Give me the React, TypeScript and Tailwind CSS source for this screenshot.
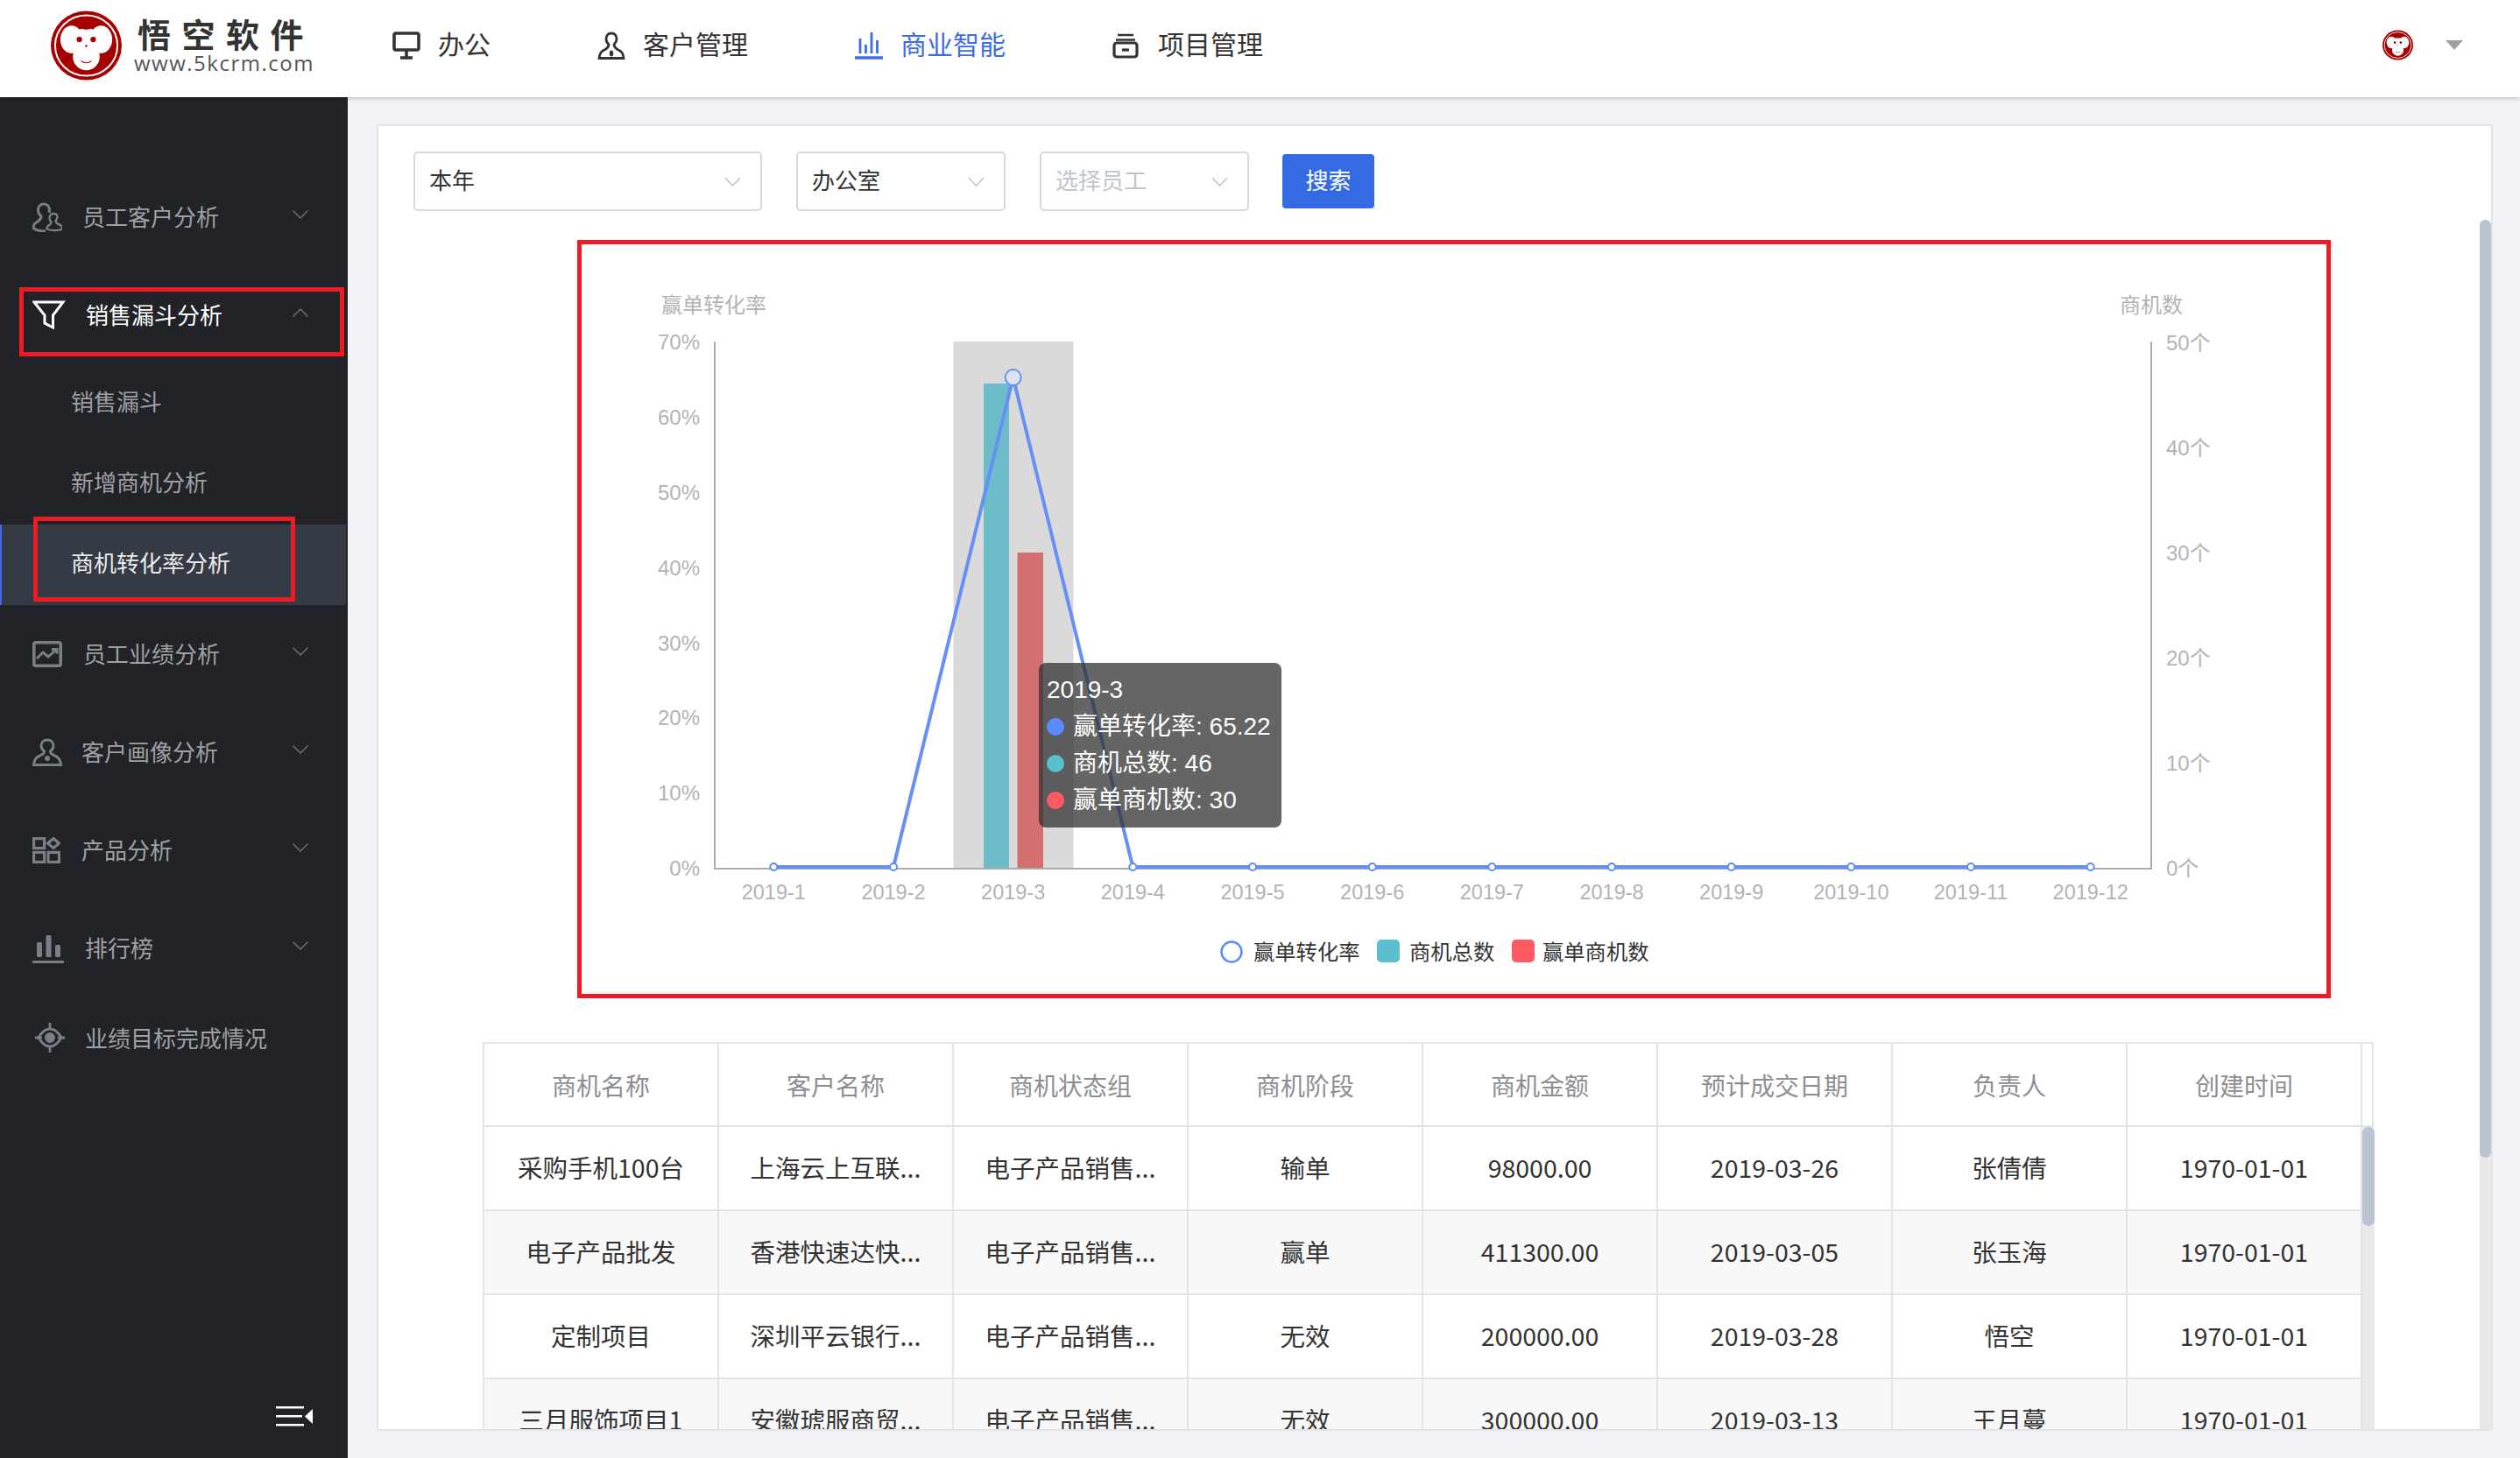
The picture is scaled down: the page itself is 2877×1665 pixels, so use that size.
import React from "react";

function MonkeyLogo({ className }: { className: string }) {
  return (
    <svg viewBox="0 0 82 80" className={className}>
      <ellipse cx="41" cy="40" rx="41" ry="40" fill="#a60000" />
      <ellipse cx="41" cy="40" rx="36" ry="35" fill="none" stroke="#fff" strokeWidth="2" />
      <ellipse cx="24" cy="33" rx="13" ry="16" fill="#fff" />
      <ellipse cx="58" cy="33" rx="13" ry="16" fill="#fff" />
      <ellipse cx="41" cy="35" rx="18" ry="15" fill="#fff" />
      <path d="M31 17 Q41 26 51 17 L46 10 H36 Z" fill="#a60000" />
      <ellipse cx="41" cy="53" rx="15.5" ry="15.5" fill="#fff" />
      <circle cx="33" cy="33" r="3.2" fill="#a60000" />
      <circle cx="49" cy="33" r="3.2" fill="#a60000" />
      <circle cx="41" cy="40.5" r="1.2" fill="#a60000" />
      <path d="M35 58 Q41 62 47 58" fill="none" stroke="#a60000" strokeWidth="1.2" />
    </svg>
  );
}

function IconMonitor() {
  return (
    <svg viewBox="0 0 32 32" className="w-[32px] h-[32px] text-[#333]" fill="none" stroke="currentColor" strokeWidth="3.6">
      <rect x="2" y="2" width="28" height="19" rx="2" />
      <path d="M16 21v8M9 30h14" />
    </svg>
  );
}
function IconCustomer() {
  return (
    <svg viewBox="0 0 32 32" className="w-[32px] h-[32px] text-[#333]" fill="none" stroke="currentColor" strokeWidth="2.8">
      <path d="M16 2c-4 0-6 3-6 6.5 0 3 1.5 5 3 6.5 0 2.500-1 3.500-4 5.500-4.500 2-6.500 4-7 10h28c-.5-6-2.500-8-7-10-3-2-4-3-4-5.500 1.500-1.500 3-3.500 3-6.500C22 5 20 2 16 2z" />
      <ellipse cx="16" cy="25" rx="2.2" ry="3.5" fill="currentColor" stroke="none" />
    </svg>
  );
}
function IconBI() {
  return (
    <svg viewBox="0 0 32 32" className="w-[32px] h-[32px] text-[#3e6ce6]" fill="none" stroke="currentColor" strokeWidth="2.8">
      <path d="M6 8v17M12.5 15v10M19 1v24M25.5 10v15" />
      <path d="M0 30h32" strokeWidth="3.6" strokeLinecap="round" />
    </svg>
  );
}
function IconProject() {
  return (
    <svg viewBox="0 0 30 30" className="w-[30px] h-[30px] text-[#333]" fill="none" stroke="currentColor" strokeWidth="3.2">
      <path d="M6 3h18M4 8.5h22" strokeWidth="2.4" />
      <rect x="2" y="12" width="26" height="16" rx="3" />
      <path d="M11 20h8" />
    </svg>
  );
}

const side = "w-[34px] h-[34px] text-[#7b7e84]";
function SPeople() {
  return (
    <svg viewBox="0 0 34 34" className={side} fill="none" stroke="currentColor" strokeWidth="3">
      <path d="M13 2c-4 0-6.5 3-6.5 7 0 3 1.5 5.5 3.5 7 0 3-1 4-4 6-3 1.500-5 3-5 7.500 4 3 10 3.500 14 3.500" />
      <path d="M13 2c4 0 6.500 3 6.500 7 0 1-.2 2-.5 3" />
      <path d="M24 13c-3 0-4.500 2.500-4.500 5 0 2 1 3.500 2 4.500 0 2-1 3-3 4-2 1-2 4-2 4 5 2 12 2 18 0 0-3-2-4.500-5-5.500-2-1-3-2.500-3-4 1-1 2-2.500 2-4.500 0-2.500-1.500-3.500-4.500-3.500z" strokeWidth="2.4" />
    </svg>
  );
}
function STrend() {
  return (
    <svg viewBox="0 0 34 30" className="w-[34px] h-[30px] text-[#7b7e84]" fill="none" stroke="currentColor" strokeWidth="3.6">
      <rect x="1.8" y="1.8" width="30.4" height="26.4" rx="2" />
      <path d="M5 20l7-7 6 5 9-8M22 9.500h6v5" strokeWidth="3" />
    </svg>
  );
}
function SPerson() {
  return (
    <svg viewBox="0 0 34 32" className="w-[34px] h-[32px] text-[#7b7e84]" fill="none" stroke="currentColor" strokeWidth="3">
      <path d="M17 2c-4 0-7 2.500-7 6.500 0 3 1.500 5 3.500 6.500 0 2.500-1 3-5 5-4 1.500-6.500 4-7 10.500h31c-.5-6.500-3-9-7-10.500-4-2-5-2.500-5-5 2-1.500 3.500-3.500 3.500-6.500C24 4.500 21 2 17 2z" />
      <circle cx="17" cy="23" r="3" fill="currentColor" stroke="none" />
    </svg>
  );
}
function SGrid() {
  return (
    <svg viewBox="0 0 32 30" className="w-[32px] h-[30px] text-[#7b7e84]" fill="none" stroke="currentColor" strokeWidth="3.2">
      <rect x="1.6" y="1.6" width="12" height="11" />
      <path d="M24 1.500l6.500 5.500-6.500 5.500-6.500-5.500z" />
      <rect x="1.6" y="17.4" width="12" height="11" />
      <rect x="18" y="17.4" width="12.4" height="11" />
    </svg>
  );
}
function SBars() {
  return (
    <svg viewBox="0 0 36 34" className="w-[36px] h-[34px] text-[#7b7e84]" fill="currentColor">
      <rect x="5" y="10" width="6" height="17" rx="1.5" />
      <rect x="15.5" y="2" width="6" height="25" rx="1.5" />
      <rect x="26" y="13" width="6" height="14" rx="1.5" />
      <rect x="0" y="31" width="36" height="3" rx="1" />
    </svg>
  );
}
function STarget() {
  return (
    <svg viewBox="0 0 34 34" className="w-[34px] h-[34px] text-[#7b7e84]" fill="none" stroke="currentColor" strokeWidth="2.8">
      <path d="M4 17C8 10 12 7 17 7s9 3 13 10c-4 7-8 10-13 10S8 24 4 17z" />
      <circle cx="17" cy="17" r="4.5" fill="currentColor" />
      <path d="M0 17h8M26 17h8M17 0v7M17 27v7" />
    </svg>
  );
}
function SFunnel() {
  return (
    <svg viewBox="0 0 38 33" className="w-[38px] h-[33px] text-white" fill="none" stroke="currentColor" strokeWidth="3">
      <path d="M2 2h33L23.5 17v14L14 26V17z" />
    </svg>
  );
}

function Chevron({ up }: { up?: boolean }) {
  return (
    <svg viewBox="0 0 18 10" className="w-[18px] h-[10px] text-[#6f7176] ml-auto mr-[45px] mb-[6px] shrink-0" fill="none" stroke="currentColor" strokeWidth="1.4">
      <path d={up ? "M0.5 9.5L9 1l8.5 8.5" : "M0.5 0.5L9 9l8.5-8.5"} />
    </svg>
  );
}
function SelectChevron() {
  return (
    <svg viewBox="0 0 19 11" className="w-[19px] h-[11px] text-[#c0c4cc] ml-auto shrink-0" fill="none" stroke="currentColor" strokeWidth="1.6">
      <path d="M1 1l8.500 9L18 1" />
    </svg>
  );
}

const HEAD = ["商机名称", "客户名称", "商机状态组", "商机阶段", "商机金额", "预计成交日期", "负责人", "创建时间"];
const ROWS = [
  ["采购手机100台", "上海云上互联...", "电子产品销售...", "输单", "98000.00", "2019-03-26", "张倩倩", "1970-01-01"],
  ["电子产品批发", "香港快速达快...", "电子产品销售...", "赢单", "411300.00", "2019-03-05", "张玉海", "1970-01-01"],
  ["定制项目", "深圳平云银行...", "电子产品销售...", "无效", "200000.00", "2019-03-28", "悟空", "1970-01-01"],
  ["三月服饰项目1", "安徽琥服商贸...", "电子产品销售...", "无效", "300000.00", "2019-03-13", "王月蔓", "1970-01-01"],
];

const MONTHS = ["2019-1", "2019-2", "2019-3", "2019-4", "2019-5", "2019-6", "2019-7", "2019-8", "2019-9", "2019-10", "2019-11", "2019-12"];
const PCT = ["0%", "10%", "20%", "30%", "40%", "50%", "60%", "70%"];
const CNT = ["0个", "10个", "20个", "30个", "40个", "50个"];
const mx = (i: number) => 815 + 136.67 * (i + 0.5);

function Chart() {
  const linePts = MONTHS.map((_, i) => `${mx(i)},${i === 2 ? 431 : 990}`).join(" ");
  return (
    <svg viewBox="664 279 1992 856" className="w-[1992px] h-[856px] block">
      <g fontSize="24" fill="#b3b3b3">
        <text x="815" y="357" textAnchor="middle">赢单转化率</text>
        <text x="2456" y="357" textAnchor="middle">商机数</text>
        {PCT.map((t, i) => (
          <text key={t} x="799" y={1000 - i * 85.8} textAnchor="end">{t}</text>
        ))}
        {CNT.map((t, i) => (
          <text key={t} x="2473" y={1000 - i * 120} >{t}</text>
        ))}
        {MONTHS.map((t, i) => (
          <text key={t} x={mx(i)} y="1027" textAnchor="middle" fontSize="23.5">{t}</text>
        ))}
      </g>
      <rect x="1088.5" y="390" width="137" height="602" fill="#dadada" />
      <rect x="1123" y="438" width="29" height="554" fill="#6dbcc9" />
      <rect x="1161.5" y="631" width="29.5" height="361" fill="#d46f71" />
      <path d="M816 390V992H2456V390" fill="none" stroke="#ababab" strokeWidth="2" />
      <polyline points={linePts} fill="none" stroke="#6590f5" strokeWidth="4" />
      {MONTHS.map((_, i) =>
        i === 2 ? (
          <circle key={i} cx={mx(i)} cy="431" r="9" fill="#dde3ef" stroke="#6590f5" strokeWidth="2" />
        ) : (
          <circle key={i} cx={mx(i)} cy="990" r="4" fill="#fff" stroke="#5b8cff" strokeWidth="2" />
        ),
      )}
      <circle cx="1406" cy="1087" r="11.5" fill="#fff" stroke="#5b8cff" strokeWidth="2.5" />
      <text x="1431" y="1096" fontSize="24.3" fill="#333">赢单转化率</text>
      <rect x="1572" y="1073" width="26" height="26" rx="5" fill="#5abfce" />
      <text x="1609" y="1096" fontSize="24.3" fill="#333">商机总数</text>
      <rect x="1726" y="1073" width="26" height="26" rx="5" fill="#ff5a63" />
      <text x="1761" y="1096" fontSize="24.3" fill="#333">赢单商机数</text>
    </svg>
  );
}

export default function App() {
  return (
    <div className="w-[2877px] h-[1665px] flex flex-col overflow-hidden bg-[#f2f3f7] font-['Noto_Sans_CJK_SC',sans-serif] text-[#333]">
      <header className="relative z-10 h-[111px] shrink-0 bg-white shadow-[0_1px_5px_rgba(0,0,0,0.25)] flex items-center pl-[58px] pb-[8px]">
        <MonkeyLogo className="w-[81px] h-[80px] shrink-0" />
        <div className="ml-[14px] w-[210px] flex flex-col">
          <div className="text-[38px] leading-[38px] font-bold tracking-[12.5px] text-[#333] pl-[4px] whitespace-nowrap">悟空软件</div>
          <div className="mt-[3px] text-[24px] leading-[24px] tracking-[1.5px] text-[#555] font-['Open_Sans',sans-serif]">www.5kcrm.com</div>
        </div>
        <nav className="ml-[85px] flex items-center gap-[122px] text-[30px] leading-[40px]">
          <div className="flex items-center gap-[20px]"><IconMonitor /><span className="mb-[6px]">办公</span></div>
          <div className="flex items-center gap-[20px]"><IconCustomer /><span className="mb-[6px]">客户管理</span></div>
          <div className="flex items-center gap-[20px] text-[#3e6ce6]"><IconBI /><span className="mb-[6px]">商业智能</span></div>
          <div className="flex items-center gap-[22px]"><IconProject /><span className="mb-[6px]">项目管理</span></div>
        </nav>
        <MonkeyLogo className="ml-auto w-[35px] h-[35px] shrink-0" />
        <div className="ml-[37px] mr-[65px] w-0 h-0 border-x-[10px] border-x-transparent border-t-[11px] border-t-[#a0a0a0]" />
      </header>

      <div className="flex flex-1 min-h-0">
        <aside className="w-[397px] shrink-0 bg-[#212328] flex flex-col pt-[81px] text-[26px] text-[#9fa0a3]">
          <div className="h-[112px] flex items-center pl-[37px]">
            <SPeople /><span className="ml-[23px] mb-[3px]">员工客户分析</span><Chevron />
          </div>
          <div className="relative h-[111px] flex items-center pl-[37px] text-white">
            <SFunnel /><span className="ml-[23px] mb-[3px]">销售漏斗分析</span><Chevron up />
            <div className="absolute left-[22px] top-[24px] w-[371px] h-[79px] border-[5px] border-[#ed1c24]" />
          </div>
          <div className="h-[92px] flex items-center pl-[81px]"><span className="mb-[7px]">销售漏斗</span></div>
          <div className="h-[92px] flex items-center pl-[81px]"><span className="mb-[7px]">新增商机分析</span></div>
          <div className="relative h-[92px] flex items-center pl-[81px] mr-[2px] bg-[#343b44] border-l-[2px] border-l-[#3e6ce6] text-[#eaeaea]">
            <span className="-ml-[2px] mb-[7px]">商机转化率分析</span>
            <div className="absolute left-[36px] -top-[9px] w-[299px] h-[97px] border-[5px] border-[#ed1c24]" />
          </div>
          <div className="h-[112px] flex items-center pl-[37px]">
            <STrend /><span className="ml-[24px] mb-[3px]">员工业绩分析</span><Chevron />
          </div>
          <div className="h-[112px] flex items-center pl-[37px]">
            <SPerson /><span className="ml-[22px] mb-[3px]">客户画像分析</span><Chevron />
          </div>
          <div className="h-[112px] flex items-center pl-[37px]">
            <SGrid /><span className="ml-[24px] mb-[3px]">产品分析</span><Chevron />
          </div>
          <div className="h-[112px] flex items-center pl-[37px]">
            <SBars /><span className="ml-[24px] mb-[3px]">排行榜</span><Chevron />
          </div>
          <div className="h-[92px] flex items-center pl-[40px]">
            <STarget /><span className="ml-[23px] mb-[1px]">业绩目标完成情况</span>
          </div>
          <div className="mt-auto mb-[35px] ml-[315px] w-[42px] h-[24px] text-white">
            <svg viewBox="0 0 42 24" className="w-[42px] h-[24px]" fill="currentColor">
              <rect x="0" y="0" width="32" height="2.5" />
              <rect x="0" y="10" width="30" height="2.5" />
              <rect x="0" y="20" width="32" height="2.5" />
              <path d="M33 11.5L42 3v17z" />
            </svg>
          </div>
        </aside>

        <main className="flex-1 min-w-0 pt-[31px] pl-[33px] pr-[31px] pb-[31px]">
          <div className="w-full h-full bg-white border-2 border-[#e4e4e6] rounded-[3px] overflow-hidden flex">
            <div className="flex-1 min-w-0 overflow-hidden pt-[29px]">
              <div className="flex items-center pl-[40px] text-[26px]">
                <div className="w-[398px] h-[68px] border-2 border-[#d9d9d9] rounded-[5px] flex items-center pl-[16px] pr-[22px]">
                  <span className="mb-[5px]">本年</span><SelectChevron />
                </div>
                <div className="ml-[39px] w-[239px] h-[68px] border-2 border-[#d9d9d9] rounded-[5px] flex items-center pl-[16px] pr-[22px]">
                  <span className="mb-[5px]">办公室</span><SelectChevron />
                </div>
                <div className="ml-[39px] w-[239px] h-[68px] border-2 border-[#d9d9d9] rounded-[5px] flex items-center pl-[16px] pr-[22px] text-[#c0c4cc]">
                  <span className="mb-[5px]">选择员工</span><SelectChevron />
                </div>
                <button className="ml-[38px] w-[105px] h-[62px] bg-[#346ae3] rounded-[4px] text-white text-center pb-[5px]">搜索</button>
              </div>

              <div className="relative mt-[33px] ml-[227px] w-[2002px] h-[866px] border-[5px] border-[#ed1c24] font-['Liberation_Sans','Noto_Sans_CJK_SC',sans-serif]">
                <Chart />
                <div className="absolute left-[522px] top-[478px] w-[277px] h-[188px] rounded-[8px] bg-[rgba(50,50,50,0.75)] text-white text-[28px] leading-[42px] pl-[9px] pt-[10px]">
                  <div>2019-3</div>
                  <div className="flex items-center"><span className="w-[20px] h-[20px] rounded-full bg-[#5b8cff] mr-[10px]" />赢单转化率: 65.22</div>
                  <div className="flex items-center"><span className="w-[20px] h-[20px] rounded-full bg-[#5abfce] mr-[10px]" />商机总数: 46</div>
                  <div className="flex items-center"><span className="w-[20px] h-[20px] rounded-full bg-[#ff5a63] mr-[10px]" />赢单商机数: 30</div>
                </div>
              </div>

              <div className="mt-[50px] ml-[119px] w-[2159px] border-l-2 border-t-2 border-[#e4e4e4] text-[28px]">
                <div className="flex h-[95px] border-b-2 border-[#e4e4e4] text-[#8d8e93]">
                  {HEAD.map((h) => (
                    <div key={h} className="w-[268px] shrink-0 flex items-center justify-center border-r-2 border-[#e4e4e4]">{h}</div>
                  ))}
                  <div className="w-[14px] border-r-2 border-[#e4e4e4]" />
                </div>
                <div className="flex text-[28.5px]">
                  <div className="w-[2144px] shrink-0">
                    {ROWS.map((row, i) => (
                      <div key={i} className={i % 2 ? "flex h-[96px] border-b-2 border-[#e4e4e4] bg-[#f8f8f8]" : "flex h-[96px] border-b-2 border-[#e4e4e4] bg-white"}>
                        {row.map((c, j) => (
                          <div key={j} className="w-[268px] shrink-0 flex items-center justify-center border-r-2 border-[#e4e4e4] pb-[2px]">{c}</div>
                        ))}
                      </div>
                    ))}
                  </div>
                  <div className="w-[14px] bg-[#e9e9e9]">
                    <div className="w-[14px] h-[113px] rounded-full bg-[#bac4d0]" />
                  </div>
                </div>
              </div>
            </div>
            <div className="w-[13px] shrink-0 pt-[107px]">
              <div className="w-[13px] h-full bg-[#e9e9e9] rounded-t-full">
                <div className="w-[13px] h-[1071px] rounded-full bg-[#bac4d0]" />
              </div>
            </div>
          </div>
        </main>
      </div>
    </div>
  );
}
